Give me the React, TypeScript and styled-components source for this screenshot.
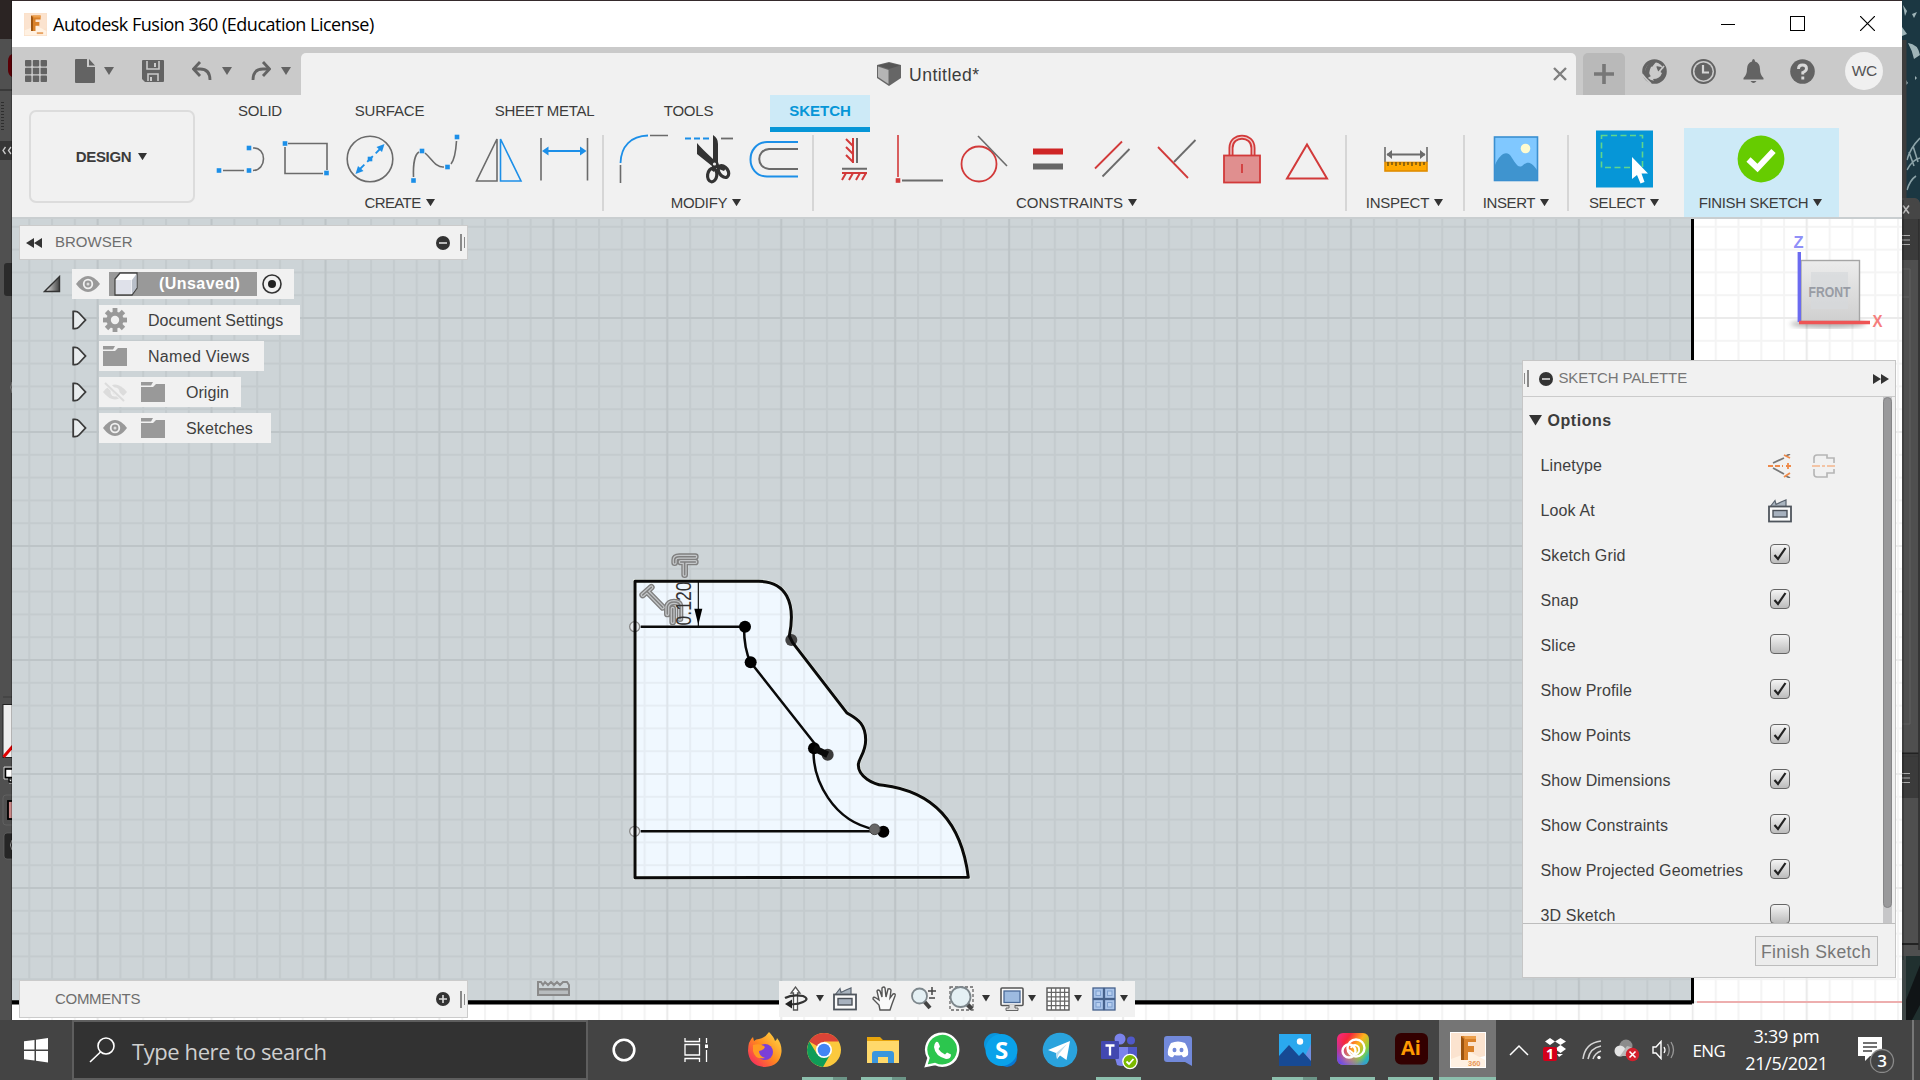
import React from "react";
import styled, { createGlobalStyle, css } from "styled-components";

const ui = `"Liberation Sans", Arial, sans-serif`;
const segoe = `"Open Sans", "Noto Sans", sans-serif`;

const Global = createGlobalStyle`
  * { box-sizing: border-box; }
  body { margin: 0; background: #444; overflow: hidden; }
  svg { display: block; flex: none; }
`;

/* ---------- frame ---------- */
const Screen = styled.div`
  width: 1920px; height: 1080px; display: flex; flex-direction: column;
  font-family: ${ui}; font-size: 16px; color: #3c3c3c; white-space: nowrap; overflow: hidden;
`;
const Desktop = styled.div`display: flex; height: 1020px; background: #352a2c;`;
const AppWindow = styled.main`
  width: 1890px; height: 1019px; margin-top: 1px; display: flex; flex-direction: column; background: #f1f1f1;
`;
const TitleBar = styled.header`
  height: 46px; background: #fff; display: flex; align-items: center; padding: 0 27px 0 12px;
  font-family: ${segoe}; color: #000;
`;
const Title = styled.span`font-size: 18px; letter-spacing: -0.5px; margin-left: 6px; flex: 1;`;
const WinButtons = styled.div`display: flex; gap: 55px; align-items: center; padding-bottom: 1px;`;

const DocBar = styled.div`height: 48px; background: #cacaca; display: flex; align-items: flex-end;`;
const QuickTools = styled.div`width: 289px; height: 48px; display: flex; align-items: center; padding: 0 0 0 12px;`;
const DocTab = styled.div`
  width: 1275px; height: 42px; background: #f1f1f1; border-radius: 5px 5px 0 0; display: flex; align-items: center;
  padding: 0 9px 0 576px;
`;
const DocName = styled.span`font-size: 17.6px; margin-left: 8px; flex: 1; letter-spacing: 0.45px; padding-top: 3px;`;
const NewTab = styled.div`
  width: 42px; height: 42px; margin-left: 7px; background: #b9b9b9; border-radius: 5px 5px 0 0;
  display: flex; align-items: center; justify-content: center;
`;
const Account = styled.div`flex: 1; height: 48px; display: flex; align-items: center; padding-left: 17px; gap: 24.3px;`;
const Avatar = styled.div`
  width: 38px; height: 38px; border-radius: 50%; background: #f0f0f0; margin-left: 6px; color: #555;
  font-size: 15.5px; letter-spacing: -0.5px; display: flex; align-items: center; justify-content: center;
`;

/* ---------- ribbon ---------- */
const Ribbon = styled.section`height: 122px; display: flex; background: #f1f1f1;`;
const Workspace = styled.div`
  width: 166px; height: 93px; margin: 15px 0 0 17px; border: 2px solid #dcdcdc; border-radius: 7px;
  display: flex; align-items: center; justify-content: center; gap: 7px; font-weight: bold; font-size: 15px;
  letter-spacing: -0.35px; padding-right: 1px;
`;
const RibbonBody = styled.div`flex: 1; display: flex; flex-direction: column; margin-left: 14px;`;
const Tabs = styled.nav`height: 37px; display: flex; font-size: 15px;`;
const Tab = styled.span<{ $w: number; $on?: boolean; $ls?: number }>`
  width: ${p => p.$w}px; height: 37px; display: flex; align-items: center; justify-content: center;
  letter-spacing: ${p => p.$ls ?? -0.2}px; padding-bottom: 6px;
  ${p => p.$on && css`background: #cdeaf7; color: #0696d7; font-weight: bold; border-bottom: 5px solid #0696d7; padding: 0 0 1px;`}
`;
const Groups = styled.div`height: 85px; display: flex;`;
const Group = styled.div<{ $w: number; $line?: boolean; $hot?: boolean; $end?: number }>`
  width: ${p => p.$w}px; height: 89px; margin-top: -4px; padding: 6px ${p => p.$end ?? 0}px 0 0; display: flex; flex-direction: column;
  align-items: center; background: ${p => (p.$hot ? "#cdeaf7" : "none")};
  background-image: ${p => (p.$line ? "linear-gradient(#d6d6d6,#d6d6d6)" : "none")};
  background-size: 2px 76px; background-repeat: no-repeat; background-position: right 0 top 7px;
`;
const Tools = styled.div`display: flex; height: 50px;`;
const Tool = styled.div`width: 64.6px; display: flex; justify-content: center;`;
const GroupName = styled.div<{ $ls?: number; $shift?: number }>`
  display: flex; align-items: center; gap: 5px; font-size: 15px; letter-spacing: ${p => p.$ls ?? -0.25}px;
  margin-top: 9.5px; height: 18px; padding-right: ${p => p.$shift ?? 0}px;
`;

/* ---------- canvas & floating panels ---------- */
const Canvas = styled.section`position: relative; height: 803px; background: #fff; overflow: hidden;`;
const Panel = styled.div<{ $top: number; $h: number }>`
  position: absolute; left: 7px; top: ${p => p.$top}px; width: 449px; height: ${p => p.$h}px;
  background: #f1f1f1; border: 1px solid #cbcbcb; display: flex; align-items: center; font-size: 15px; color: #6e6e6e;
  padding: 0 2px 0 6px;
`;
const PanelName = styled.span<{ $indent: number; $ls?: number }>`
  margin-left: ${p => p.$indent}px; flex: 1; letter-spacing: ${p => p.$ls ?? 0}px; padding-bottom: 2px;
`;
const Grip = styled.span<{ $flip?: boolean }>`
  width: 5px; height: 17px; display: flex; align-items: center; justify-content: space-between;
  flex-direction: ${p => (p.$flip ? "row-reverse" : "row")};
  &::before, &::after { content: ""; width: 1.5px; background: #8a8a8a; height: 17px; }
  &::after { height: 11px; }
`;
const Tree = styled.div`position: absolute; left: 26px; top: 52px; display: flex; flex-direction: column; gap: 6px;`;
const TreeRow = styled.div<{ $pad: number }>`display: flex; align-items: center; height: 30px; padding-left: ${p => p.$pad}px;`;
const TreeBox = styled.div<{ $w: number; $gap: number }>`
  width: ${p => p.$w}px; height: 30px; background: #f1f1f1; margin-left: ${p => p.$gap}px; padding-left: 4px;
  display: flex; align-items: center;
`;
const TreeText = styled.span<{ $m: number; $ls?: number }>`
  margin-left: ${p => p.$m}px; color: #3f3f3f; padding-top: 2px; letter-spacing: ${p => p.$ls ?? 0.05}px;
`;
const Selected = styled.div`
  width: 148px; height: 24px; margin: 0 5px 0 9px; background: #999; color: #fff; font-weight: bold; letter-spacing: 0.45px;
  display: flex; align-items: center; padding-left: 5px; gap: 21px;
`;

const Palette = styled.aside`
  position: absolute; left: 1509.5px; top: 143px; width: 374px; height: 618px; background: #f1f1f1;
  border: 1px solid #c6c6c6; display: flex; flex-direction: column;
`;
const PaletteHead = styled.div`
  height: 36px; border-bottom: 1.5px solid #cbcbcb; display: flex; align-items: center; font-size: 15px; color: #777;
  padding: 0 6px 0 1px; letter-spacing: -0.2px;
`;
const PaletteBody = styled.div`height: 527px; display: flex; justify-content: space-between; overflow: hidden; border-bottom: 1.5px solid #bdbdbd;`;
const Options = styled.div`flex: 1;`;
const OptionsHead = styled.div`
  height: 46px; display: flex; align-items: center; gap: 6px; padding: 1px 0 0 6px; font-weight: bold; letter-spacing: 0.55px;
`;
const OptionRow = styled.div`height: 45px; display: flex; align-items: center; padding-left: 18px; letter-spacing: 0.14px; color: #404040;`;
const OptionName = styled.span`width: 227.5px;`;
const Check = styled.span`
  width: 20px; height: 20px; margin: -4px 0 0 2px; border: 1.5px solid #666; border-radius: 4px;
  background: linear-gradient(#f4f4f4, #bcbcbc); display: flex; align-items: center; justify-content: center;
`;
const Scroll = styled.div`width: 9px; margin-right: 3px; background: #c6c6c8;`;
const Thumb = styled.div`height: 511px; border-radius: 5px; background: #99999b; border: 1px solid #858587;`;
const PaletteFoot = styled.div`flex: 1; display: flex; align-items: center; justify-content: flex-end; padding: 1px 17px 0 0;`;
const FinishButton = styled.button`
  width: 123px; height: 30px; border: 1.5px solid #bdbdbd; background: #ececec; color: #777; font: 17.6px ${ui};
  padding: 2px 0 0; letter-spacing: 0.35px;
`;
const NavBar = styled.div`
  position: absolute; left: 767px; top: 763.5px; width: 356px; height: 36px; background: #f1f1f1; display: flex;
  align-items: center; padding-left: 4px;
`;
const NavItem = styled.span<{ $w: number; $gap?: number }>`width: ${p => p.$w}px; display: flex; align-items: center; gap: ${p => p.$gap ?? 4}px;`;

/* ---------- taskbar ---------- */
const Taskbar = styled.footer`height: 60px; background: #444; display: flex; font-family: ${segoe}; color: #fff;`;
const Cell = styled.div<{ $w: number; $hot?: boolean }>`
  width: ${p => p.$w}px; height: 60px; display: flex; flex-direction: column; align-items: center; justify-content: space-between;
  padding-top: 12px; background: ${p => (p.$hot ? "#757575" : "none")};
`;
const Running = styled.div<{ $w: number; $two?: boolean }>`
  width: ${p => p.$w}px; height: 3px;
  background: ${p => (p.$two ? "linear-gradient(90deg,#8cbfad 68%,#52705f 68%,#52705f 70%,#6c9587 70%)" : "#8cbfad")};
`;
const Search = styled.div`
  width: 516px; height: 60px; background: #323232; border: 2px solid #5e5e5e; display: flex; align-items: center;
  padding-left: 15px; gap: 17px; font-size: 22px; letter-spacing: -0.42px; color: #cfcfcf;
`;
const Prompt = styled.span`padding-top: 2px;`;
const Tray = styled.div`display: flex; align-items: center; margin-left: 13px; font-size: 18px;`;
const Lang = styled.span`margin-left: 16px; width: 34px; font-size: 17px; letter-spacing: -0.6px;`;
const Clock = styled.div`
  margin-left: 15px; width: 90px; display: flex; flex-direction: column; align-items: center; line-height: 27px;
  font-size: 18px; letter-spacing: -0.3px;
`;
const ShowDesktop = styled.div`margin-left: 16px; width: 2px; height: 60px; background: #777;`;
const Spacer = styled.div<{ $w: number }>`width: ${p => p.$w}px; flex: none;`;

/* ---------- small icons ---------- */
const Caret = ({ s = 9, c = "#333" }: { s?: number; c?: string }) => (
  <svg width={s} height={s * 0.8} viewBox="0 0 10 8"><path d="M0 0H10L5 8Z" fill={c} /></svg>
);
const Ico = ({ w, h = w, vb, children }: { w: number; h?: number; vb?: string; children: React.ReactNode }) => (
  <svg width={w} height={h} viewBox={vb ?? `0 0 ${w} ${h}`} fill="none">{children}</svg>
);
const RoundSign = ({ plus }: { plus?: boolean }) => (
  <Ico w={14}><circle cx="7" cy="7" r="7" fill="#333" /><path d={plus ? "M3 7H11M7 3V11" : "M3 7H11"} stroke="#ddd" strokeWidth="1.6" /></Ico>
);
const Eye = () => (
  <Ico w={24} h={16}>
    <path d="M0 8Q12-8 24 8Q12 24 0 8Z" fill="#999" /><circle cx="12" cy="8" r="5.2" fill="#f1f1f1" />
    <circle cx="12" cy="8" r="3.4" fill="#999" /><circle cx="12" cy="8" r="1.5" fill="#ddd" />
  </Ico>
);
const EyeOff = () => (
  <Ico w={24} h={20}>
    <path d="M0 10Q12-5 24 10Q12 25 0 10Z" fill="#dcdcdc" /><circle cx="12" cy="10" r="4.5" fill="#f1f1f1" />
    <circle cx="12" cy="10" r="2.5" fill="#dcdcdc" /><path d="M2 0L22 19" stroke="#f1f1f1" strokeWidth="5" /><path d="M2 1L21 19" stroke="#dcdcdc" strokeWidth="2" />
  </Ico>
);
const Folder = () => (
  <Ico w={24} h={20}><path d="M0 5H12L15 2H24V20H0Z" fill="#999" /><path d="M0 0H12L10 3.4H0Z" fill="#999" /></Ico>
);
const Gear = () => (
  <Ico w={24}>
    {[0, 45, 90, 135].map(a => <rect key={a} x="9.6" y="0" width="4.8" height="24" fill="#999" transform={`rotate(${a} 12 12)`} />)}
    <circle cx="12" cy="12" r="8.6" fill="#999" /><circle cx="12" cy="12" r="4.2" fill="#f1f1f1" />
  </Ico>
);
const Expand = () => (
  <Ico w={15} h={20}><path d="M1.2 1.5Q5 .8 7 3L13.5 10L7 17Q5 19.2 1.2 18.5Z" fill="#e8ecee" stroke="#3a3a3a" strokeWidth="1.8" /></Ico>
);
const LookAt = () => (
  <Ico w={24} h={24}>
    <path d="M2 8L7 1.500L8 5.500L13 3L18 1V7.500" fill="#a9b4bf" stroke="#5a6470" strokeWidth="1.2" />
    <rect x="1" y="7.500" width="22" height="15" fill="#fafafa" stroke="#4f555d" strokeWidth="1.800" />
    <rect x="5" y="11.500" width="14" height="6.500" fill="#a7b1be" stroke="#4a5058" strokeWidth="1.4" />
  </Ico>
);

const K = "#6b6b6b", B = "#1c8fe8", R = "#d23a3a";
const Dot = ({ x, y, c = B }: { x: number; y: number; c?: string }) => <rect x={x - 2.3} y={y - 2.3} width="4.6" height="4.6" fill={c} />;
const T = ({ children }: { children: React.ReactNode }) => (
  <Tool><svg width="50" height="50" viewBox="0 0 50 50" fill="none" strokeWidth="1.6">{children}</svg></Tool>
);

const CreateTools = () => (
  <Tools>
    <T><path d="M7 36.5H28M37 14C51 13 51 36 37 36.5" stroke={K} /><Dot x={3} y={36.5} /><Dot x={33} y={36.5} /><Dot x={33} y={14} /></T>
    <T><path d="M7 9.5H46V36M42 39.5H4V13" stroke={K} /><Dot x={4} y={9.5} /><Dot x={45.5} y={39} /></T>
    <T>
      <circle cx="25" cy="25" r="22.8" stroke={K} /><path d="M13 37L37 13" stroke={B} strokeWidth="1.800" strokeDasharray="9 4 8 4" />
      <path d="M39.5 10L37 18L31.5 13Z M10.5 40L13 32L18.5 37Z" fill={B} /><Dot x={25} y={25} />
    </T>
    <T>
      <path d="M3.5 43C3 30 5 20 9 18M15 19C22 25 26 34 34 33M41 30C45 25 46 15 46.5 7" stroke={K} />
      <Dot x={3.5} y={46.5} /><Dot x={12} y={17} /><Dot x={37.5} y={33} /><Dot x={47} y={3} />
    </T>
    <T><path d="M23 5V47H2.5Z" stroke={K} /><path d="M26.5 5V47H47Z" stroke={B} /></T>
    <T><path d="M2 4V46.5M48.5 4V46.5" stroke={K} /><path d="M7 17H44" stroke={B} strokeWidth="2" /><path d="M3 17L9.5 12.5V21.5Z M47.5 17L41 12.5V21.5Z" fill={B} /></T>
  </Tools>
);
const ModifyTools = () => (
  <Tools>
    <T><path d="M1.5 29C2 12 12 2 29 1.5" stroke={B} strokeWidth="1.800" /><path d="M1.5 31V49M31 1.5H49" stroke={K} /></T>
    <T>
      <path d="M1 4.5H25" stroke={B} strokeWidth="2" strokeDasharray="6 3" /><path d="M37 4.5H49" stroke={K} strokeWidth="1.8" />
      <path d="M29 1Q34 4 34 10V28L35 31L42 34L40 37L32 34L30 38L27 36L28 32L13 20L13 9Q17 14 29 25Z" fill="#333" />
      <circle cx="30.5" cy="30" r="1.6" fill="#eee" />
      <ellipse cx="28.2" cy="41" rx="4.6" ry="6.8" stroke="#333" strokeWidth="3.2" transform="rotate(8 28 41)" />
      <ellipse cx="39.5" cy="37.5" rx="4.4" ry="6.6" stroke="#333" strokeWidth="3.2" transform="rotate(-35 39.5 37.5)" />
    </T>
    <T><path d="M49 8H18C-4 9-4 42 18 42.5H49" stroke={B} strokeWidth="2" /><path d="M49 15H20C7 16 7 34 20 35H49" stroke={K} strokeWidth="2" /></T>
  </Tools>
);
const ConstraintTools = () => (
  <Tools>
    <T>
      <path d="M24 4V29M17 5L24 12M17 13L24 20M17 21L24 28M13 39H38M17 39L13 46M24 39L20 46M31 39L27 46M37 39L33 46" stroke={R} strokeWidth="2" />
      <path d="M28 4V29M13 34.8H38" stroke={K} strokeWidth="2" />
    </T>
    <T><path d="M4 1V43" stroke={R} /><path d="M8 46.5H49" stroke={K} strokeWidth="1.8" /><Dot x={4} y={46.5} c={R} /></T>
    <T><circle cx="20" cy="30" r="17.5" stroke={R} strokeWidth="1.8" /><path d="M19 2L48 32" stroke={K} /></T>
    <T><rect x="10" y="14.5" width="30" height="6" fill="#cf2525" /><rect x="10" y="29.5" width="30" height="6" fill="#666" /></T>
    <T><path d="M7 34.5L34 7.5" stroke={R} strokeWidth="1.8" /><path d="M14.500 42.500L41.500 15" stroke={K} strokeWidth="1.8" /></T>
    <T><path d="M6 13L36 44" stroke={R} strokeWidth="1.8" /><path d="M22 28L43.500 6" stroke={K} strokeWidth="1.8" /></T>
    <T>
      <path d="M14 22V14C14 -.5 36 -.5 36 14V22" stroke={R} strokeWidth="5" /><path d="M14 22V14C14 -.5 36 -.5 36 14V22" stroke="#f0c9c9" strokeWidth="1.4" />
      <rect x="7" y="21.500" width="36" height="27" fill="#e08f8f" stroke={R} strokeWidth="1.800" /><path d="M25 30V39" stroke={R} strokeWidth="1.800" />
    </T>
    <T><path d="M25 10.500L45 44.500H5Z" stroke={R} strokeWidth="2" /></T>
  </Tools>
);

const glyphs = "M286 50H238Q224 50 224 60V68M286 66H242M254 66V104M128 165L154 142M142 155L188 202M202 222V200Q206 186 222 186Q240 186 240 200V236M218 206V246";

const Sketch = () => (
  <svg width="1890" height="803" viewBox="12 217 1890 803" fill="none">
    <defs>
      <pattern id="minor" x="97.6" y="318" width="22.79" height="22.8" patternUnits="userSpaceOnUse">
        <path d="M0 0H22.8M0 0V22.8M0 22.8H22.8M22.8 0V22.8" stroke="#000" strokeOpacity=".042" strokeWidth="2" />
      </pattern>
      <pattern id="major" x="97.6" y="318" width="113.93" height="114" patternUnits="userSpaceOnUse">
        <path d="M0 0H114M0 0V114M0 114H114M113.93 0V114" stroke="#000" strokeOpacity=".035" strokeWidth="2.2" />
      </pattern>
      <linearGradient id="cubeface" x1="0" y1="0" x2="0" y2="1"><stop stopColor="#ececec" /><stop offset="1" stopColor="#cfcfcf" /></linearGradient>
      <filter id="soft"><feGaussianBlur stdDeviation="2.5" /></filter>
    </defs>
    <rect x="12" y="217" width="1681" height="785" fill="#cdd4d7" />
    <g transform="translate(600 540) scale(.33333)">
      <path d="M105 124H470C560 121 588 190 568 288L578 308L740 518C765 535 797 545 797 600C797 640 775 655 775 675C775 710 820 733 850 736C1000 755 1085 850 1105 1012L105 1013Z" fill="#f0f8ff" stroke="#f4fbf2" strokeWidth="11" />
    </g>
    <rect x="12" y="217" width="1890" height="803" fill="url(#minor)" />
    <rect x="12" y="217" width="1890" height="803" fill="url(#major)" />
    <path d="M1694 217V1000M1694 1004V1020" stroke="#fff" strokeOpacity=".6" />
    <path d="M1692.500 217V1002H12" stroke="#000" strokeWidth="3" />
    <path d="M12 1002.500H1692" stroke="#000" strokeWidth="4" />
    <path d="M1697 1002H1902" stroke="#ee9a9a" strokeWidth="1.600" />
    <rect x="12" y="217" width="1890" height="2" fill="#c9ced0" />
    <g transform="translate(600 540) scale(.33333)" stroke="#0a0a0a">
      <circle cx="104" cy="260" r="15" stroke="#888" strokeWidth="4" fill="#e6eaec" /><circle cx="104" cy="874" r="15" stroke="#888" strokeWidth="4" fill="#e6eaec" />
      <circle cx="574" cy="300" r="18" fill="#444" stroke="none" /><circle cx="683" cy="644" r="18" fill="#3a3a3a" stroke="none" />
      <path d="M105 124H470C560 121 588 190 568 288L578 308L740 518C765 535 797 545 797 600C797 640 775 655 775 675C775 710 820 733 850 736C1000 755 1085 850 1105 1012L105 1013Z" strokeWidth="9" strokeLinejoin="round" />
      <path d="M122 260H432C432 300 438 340 452 367L645 612M641 625C636 720 700 845 825 868M122 874H848" strokeWidth="7.500" />
      <path d="M295 124V258" strokeWidth="3.500" /><path d="M283 206H307L295 254Z" fill="#000" stroke="none" />
      <g fill="#000" stroke="none"><circle cx="435" cy="260" r="18" /><circle cx="452" cy="367" r="18" /><circle cx="642" cy="625" r="18" /><circle cx="850" cy="875" r="18" /></g>
      <path d="M642 625L683 644" strokeWidth="20" /><circle cx="824" cy="868" r="16" fill="#666" stroke="#444" strokeWidth="3" />
      <g strokeLinejoin="round" strokeLinecap="round">
        <path d={glyphs} stroke="#808080" strokeWidth="20" /><path d={glyphs} stroke="#c3c6c8" strokeWidth="12" /><path d={glyphs} stroke="#808080" strokeWidth="4.500" />
      </g>
    </g>
    <text transform="translate(690.500 625.500) rotate(-90)" fontFamily="Liberation Sans, sans-serif" fontSize="22" textLength="44" lengthAdjust="spacingAndGlyphs" fill="#333">0.120</text>
    <g stroke="#8a8a8a" strokeWidth="2"><path d="M538 989V982H541L543 985L545 982L548 985L551 982L554 985L557 982L560 985L563 982H567L569 985V989Z" /><rect x="538" y="989.500" width="31" height="5.500" fill="#b8bcbe" /></g>

    <ellipse cx="1828" cy="324" rx="38" ry="4" fill="#000" opacity=".3" filter="url(#soft)" />
    <rect x="1801" y="260.500" width="58.500" height="61" fill="url(#cubeface)" stroke="#a5a5a5" strokeWidth="1.400" />
    <rect x="1811" y="272" width="37" height="37" fill="#d6d8dc" opacity=".7" />
    <text x="1808.500" y="296.500" fontFamily="Liberation Sans, sans-serif" fontWeight="bold" fontSize="15.500" textLength="42" lengthAdjust="spacingAndGlyphs" fill="#989ca4">FRONT</text>
    <path d="M1799.300 252V322" stroke="#6b6bf0" strokeWidth="3.400" /><path d="M1799 322.500H1870" stroke="#ee5555" strokeWidth="3.400" />
    <text x="1793.500" y="248" fontFamily="Liberation Sans, sans-serif" fontWeight="bold" fontSize="16.500" fill="#9090f8">Z</text>
    <text x="1872.500" y="327" fontFamily="Liberation Sans, sans-serif" fontWeight="bold" fontSize="16" textLength="10" lengthAdjust="spacingAndGlyphs" fill="#f67d7d">X</text>
  </svg>
);

/* Slivers of the windows lying behind the main one */
const LeftEdge = () => (
  <svg width="12" height="1020" fill="none">
    <rect width="12" height="1020" fill="#505050" /><rect width="12" height="39" fill="#2b2423" />
    <path d="M0 90H12" stroke="#333" strokeWidth="1.500" /><path d="M12 54Q8 56 8 61V70Q8 75 12 77Z" fill="#5a0006" />
    <path d="M2.500 102V131" stroke="#2e2e2e" strokeWidth="3" strokeDasharray="1 2" />
    <rect y="141" width="12" height="19" fill="#363636" /><path d="M5.500 147L3 150.500L5.500 154M11 147L8.500 150.500L11 154" stroke="#ccc" strokeWidth="1.300" />
    <rect x="4" y="263" width="12" height="33" rx="3" fill="#2b2b2b" /><path d="M12 382Q10 387 12 393" stroke="#999" />
    <path d="M3 697H12" stroke="#3a3a3a" /><rect x="3" y="704.500" width="12" height="53" fill="#efefef" stroke="#222" /><path d="M3.500 757L13 746" stroke="#e00000" strokeWidth="3" />
    <path d="M12 767H4V779H9V783H12" stroke="#ccc" /><path d="M12 769H5.500V777.500H12M9 778V782H12" stroke="#000" strokeWidth="1.500" fill="#fff" />
    <rect x="3" y="795" width="12" height="30" rx="3" stroke="#606060" /><rect x="8" y="801" width="8" height="18" fill="#c98888" stroke="#000" strokeWidth="1.800" />
    <rect x="4" y="833" width="12" height="26" rx="3" fill="#262626" stroke="#666" strokeWidth=".7" /><path d="M12 840Q9 845 12 850" stroke="#999" />
    <rect x="11" width="1" height="1020" fill="#000" opacity=".25" />
  </svg>
);
const RightEdge = () => (
  <svg width="18" height="1020" fill="none">
    <rect width="18" height="1020" fill="#1b3742" />
    <path d="M1 5L5 11L3 16ZM10 14L15 12L12 18ZM0 27L5 34L0 36ZM6 43Q16 44 18 55L12 59Q10 50 6 43ZM4 80L6 83L4 85ZM13 76L15 78L13 80Z" fill="#9fb4b8" />
    <path d="M5 160Q8 148 18 138M5 170Q10 160 18 158M7 152L12 166M11 146L16 162M5 190Q8 180 14 176" stroke="#8ca3a8" strokeWidth="1.600" />
    <rect y="40" width="4.500" height="160" fill="#3d3d3d" />
    <path d="M0 198H12Q18 199 18 205V960H0Z" fill="#4f4f4f" /><path d="M0 198H12Q18 199 18 205V219H0Z" fill="#464646" />
    <path d="M1 205.500L7 213.500M7 205.500L1 213.500" stroke="#bbb" strokeWidth="1.500" />
    <rect y="219" width="17" height="41" fill="#3b3b3b" /><path d="M0 235.500H8M0 240H8M0 244.500H8M0 773.500H8M0 778H8M0 782.500H8" stroke="#aaa" strokeWidth="1.200" />
    <path d="M0 269H8V724H0M0 297H7" stroke="#606060" /><path d="M0 754.500H17" stroke="#222" strokeWidth="4" /><path d="M0 755H17" stroke="#555" />
    <rect y="757" width="17" height="41" fill="#3b3b3b" /><path d="M0 773.500H8M0 778H8M0 782.500H8" stroke="#aaa" strokeWidth="1.200" />
    <path d="M0 944H17" stroke="#222" strokeWidth="2" /><path d="M17 219V950" stroke="#2c2c2c" strokeWidth="1.500" />
    <rect y="956" width="18" height="64" fill="#20302f" /><path d="M4 1000L18 965V1005L10 1020H4Z" fill="#101416" /><rect y="956" width="4" height="64" fill="#3e4646" />
    <rect width="2" y="200" height="760" fill="#000" opacity=".2" />
  </svg>
);

const options: [string, boolean][] = [
  ["Sketch Grid", true], ["Snap", true], ["Slice", false], ["Show Profile", true], ["Show Points", true],
  ["Show Dimensions", true], ["Show Constraints", true], ["Show Projected Geometries", true], ["3D Sketch", false],
];

const FusionMark = ({ s, big }: { s: number; big?: boolean }) => (
  <Ico w={s} vb="0 0 36 36">
    <rect width="36" height="36" fill={big ? "#fff" : "#fbe0c8"} /><path d="M1 1H35V24L1 32Z" fill="#fbe3cf" /><path d="M1 27L20 20L35 28V35H1Z" fill="#fff1e2" />
    <path d="M11 4H26V10H18V14H24V20H18V28H11Z" fill="#d9812a" /><path d="M11 4L14 7V28H11Z" fill="#9c5410" /><path d="M14 4H26V7H15Z" fill="#eda04c" />
    {big ? <text x="18" y="34" fontFamily="Liberation Sans, sans-serif" fontSize="7.500" fontWeight="bold" fill="#e8985a">360</text> : <path d="M20 30H30V33H20Z" fill="#e9a566" />}
  </Ico>
);

export default function App() {
  return (
    <Screen>
      <Global />
      <Desktop>
        <LeftEdge />
        <AppWindow>
          <TitleBar>
            <FusionMark s={23} />
            <Title>Autodesk Fusion 360 (Education License)</Title>
            <WinButtons>
              <Ico w={14}><path d="M0 7.500H14" stroke="#000" /></Ico>
              <Ico w={15}><rect x=".5" y=".5" width="14" height="14" stroke="#000" /></Ico>
              <Ico w={15}><path d="M0 0L15 15M15 0L0 15" stroke="#000" strokeWidth="1.200" /></Ico>
            </WinButtons>
          </TitleBar>

          <DocBar>
            <QuickTools>
              <Spacer $w={1} />
              <Ico w={22}>{[0, 1, 2].map(r => [0, 1, 2].map(c => <rect key={`${r}${c}`} x={c * 7.800} y={r * 7.800} width="6.400" height="6.400" rx=".8" fill="#636363" />))}</Ico>
              <Spacer $w={28} />
              <Ico w={20} h={24}><path d="M1 0H12V8H20V23Q20 24 19 24H1Q0 24 0 23V1Q0 0 1 0ZM14 0L20 6.500H14Z" fill="#636363" /></Ico>
              <Spacer $w={9} /><Caret s={10} c="#636363" /><Spacer $w={28} />
              <Ico w={22}><path d="M1 0H21Q22 0 22 1V21Q22 22 21 22H3L0 19V1Q0 0 1 0Z" fill="#636363" /><path d="M5 1V9H17V1M6 21V14H16V21" stroke="#cacaca" strokeWidth="1.600" /><path d="M13 3V7M9 17V21" stroke="#cacaca" strokeWidth="2" /></Ico>
              <Spacer $w={28} />
              <Ico w={20}><path d="M2 8H8Q18 8 18 19" stroke="#636363" strokeWidth="2.800" /><path d="M8 1L1.500 8L8 15" stroke="#636363" strokeWidth="2.800" /></Ico>
              <Spacer $w={10} /><Caret s={10} c="#636363" /><Spacer $w={19} />
              <Ico w={20}><path d="M18 8H12Q2 8 2 19" stroke="#636363" strokeWidth="2.800" /><path d="M12 1L18.500 8L12 15" stroke="#636363" strokeWidth="2.800" /></Ico>
              <Spacer $w={10} /><Caret s={10} c="#636363" />
            </QuickTools>
            <DocTab>
              <Ico w={24}><path d="M0 3L12 0L24 3V16L12 24L0 16Z" fill="#666" /><path d="M1 4.500L11.500 8V22L1 15Z" fill="#b5b5b5" /><path d="M1 3.500L12 7L23 3.500L12 1Z" fill="#555" /></Ico>
              <DocName>Untitled*</DocName>
              <Ico w={14}><path d="M1 1L13 13M13 1L1 13" stroke="#808080" strokeWidth="2.400" /></Ico>
            </DocTab>
            <NewTab><Ico w={20}><path d="M10 0V20M0 10H20" stroke="#777" strokeWidth="3.600" /></Ico></NewTab>
            <Account>
              <Ico w={25}>
                <circle cx="12.500" cy="12.500" r="10.800" stroke="#636363" strokeWidth="3" />
                <path d="M5 7Q8 2 14 3L10 8Q6 13 9 17L4 20Q1 13 5 7ZM14 7L16 12L20 14Q18 20 11 20L13 24Q24 23 23 11L19 8Z" fill="#636363" />
                <path d="M10 8Q6 16 11 17Q17 18 18 12M13 9L15 4M17 13L22 7" stroke="#cacaca" strokeWidth="1.800" /><path d="M0 15L4 20L9 25" stroke="#cacaca" strokeWidth="1.800" />
              </Ico>
              <Ico w={25}><circle cx="12.500" cy="12.500" r="11.500" stroke="#636363" strokeWidth="1.800" /><circle cx="12.500" cy="12.500" r="9" fill="#636363" /><path d="M12 6V13.500H18" stroke="#d5d5d5" strokeWidth="2.200" /></Ico>
              <Ico w={25}><path d="M12.500 0Q14 0 14 2.500Q19 4 19 10Q19 16 22.500 19V20.500H2.500V19Q6 16 6 10Q6 4 11 2.500Q11 0 12.500 0Z M9.500 22H15.500Q12.500 26 9.500 22Z" fill="#636363" /></Ico>
              <Ico w={25}><circle cx="12.500" cy="12.500" r="12.300" fill="#636363" /><path d="M8.500 10Q8.500 6 12.500 6Q16.500 6 16.500 9.500Q16.500 12 12.800 13.500V15.500M12.800 17.500V20.500" stroke="#d8d8d8" strokeWidth="2.900" /></Ico>
              <Avatar>WC</Avatar>
            </Account>
          </DocBar>

          <Ribbon>
            <Workspace>DESIGN <Caret /></Workspace>
            <RibbonBody>
              <Tabs>
                <Spacer $w={1} />
                <Tab $w={100}>SOLID</Tab><Tab $w={159}>SURFACE</Tab><Tab $w={151} $ls={-0.300}>SHEET METAL</Tab><Tab $w={137}>TOOLS</Tab>
                <Spacer $w={13} />
                <Tab $w={100} $on $ls={0}>SKETCH</Tab>
              </Tabs>
              <Groups>
                <Group $w={395} $line $end={8}>
                  <CreateTools /><GroupName $ls={-0.600} $shift={6}>CREATE <Caret /></GroupName>
                </Group>
                <Group $w={210} $line><ModifyTools /><GroupName $ls={-0.300} $shift={6}>MODIFY <Caret /></GroupName></Group>
                <Group $w={533} $line><ConstraintTools /><GroupName $ls={-0.050} $shift={8}>CONSTRAINTS <Caret /></GroupName></Group>
                <Group $w={118} $line>
                  <Tools><T>
                    <path d="M4 13V28M46 13V28" stroke={K} /><path d="M6 20.500H44" stroke={K} strokeWidth="1.800" /><path d="M5.500 20.500L11 16V25ZM44.500 20.500L39 16V25Z" fill={K} />
                    <rect x="4" y="28.500" width="42" height="8.500" fill="#ffa800" stroke="#e08c00" /><path d="M7 28V32M11 28V31M15 28V32M19 28V31M23 28V32M27 28V31M31 28V32M35 28V31M39 28V32M43 28V31" stroke="#7a5a10" />
                  </T></Tools>
                  <GroupName $shift={3}>INSPECT <Caret /></GroupName>
                </Group>
                <Group $w={104} $line $end={3}>
                  <Tools><T>
                    <rect x="3.500" y="3" width="43" height="43.500" fill="#80c8ff" stroke="#3a8fd0" /><circle cx="34.500" cy="14.500" r="4.800" fill="#fdfbd0" />
                    <path d="M4 31C9 20 16 15 21 24C25 30 27 34 31 32C36 27 40 27 46 36V46H4Z" fill="#3f94cf" />
                  </T></Tools>
                  <GroupName $ls={-0.400}>&#8202;INSERT <Caret /></GroupName>
                </Group>
                <Group $w={115} $end={4}>
                  <Tools>
                    <svg width="57" height="57" viewBox="0 0 57 57" fill="none" overflow="visible">
                      <rect y="-3.500" width="57" height="57" fill="#0696d7" /><rect x="5.500" y="1.500" width="41" height="32" stroke="#5fd68c" strokeWidth="1.600" strokeDasharray="6 3.500" />
                      <path d="M36 23V45L41 41L44.500 49.500L48.500 48L45.500 39.500H52Z" fill="#fff" />
                    </svg>
                  </Tools>
                  <GroupName $ls={-0.400} $shift={1}>SELECT <Caret /></GroupName>
                </Group>
                <Group $w={155} $hot $end={2}>
                  <Tools><T><circle cx="25" cy="25" r="23.400" fill="#66cc00" /><path d="M12.500 25.500L21.500 34L37.500 17" stroke="#fff" strokeWidth="6" /></T></Tools>
                  <GroupName $ls={-0.350}>FINISH SKETCH <Caret /></GroupName>
                </Group>
              </Groups>
            </RibbonBody>
          </Ribbon>

          <Canvas>
            <Sketch />
            <Panel $top={8} $h={35}>
              <Ico w={16} h={10}><path d="M8 0V10L0 5ZM16 0V10L8 5Z" fill="#333" /></Ico>
              <PanelName $indent={13}>BROWSER</PanelName><RoundSign /><Spacer $w={10} /><Grip />
            </Panel>
            <Tree>
              <TreeRow $pad={5}>
                <Ico w={18}><defs><linearGradient id="tri"><stop stopColor="#eee" /><stop offset="1" stopColor="#444" /></linearGradient></defs><path d="M16.500 1.500V16.500H1.500Z" fill="url(#tri)" stroke="#333" strokeWidth="1.400" /></Ico>
                <TreeBox $w={222} $gap={11}>
                  <Eye />
                  <Selected>
                    <Ico w={24}><path d="M1 7L6 1H23V16L18 23H1Z" fill="#fdfdfd" stroke="#444" strokeWidth="1.300" /><path d="M2 8H17.500V22H2Z" fill="#dfe1ea" /><path d="M18 8L22.500 2V16L18 22Z" fill="#b9bfc9" /></Ico>
                    (Unsaved)
                  </Selected>
                  <Ico w={20}><circle cx="10" cy="10" r="9" stroke="#333" strokeWidth="1.600" /><circle cx="10" cy="10" r="4" fill="#222" /></Ico>
                </TreeBox>
              </TreeRow>
              <TreeRow $pad={33.500}><Expand /><TreeBox $w={201} $gap={12.500}><Gear /><TreeText $m={21} $ls={0}>Document Settings</TreeText></TreeBox></TreeRow>
              <TreeRow $pad={33.500}><Expand /><TreeBox $w={165} $gap={12.500}><Folder /><TreeText $m={21} $ls={0.300}>Named Views</TreeText></TreeBox></TreeRow>
              <TreeRow $pad={33.500}><Expand /><TreeBox $w={142} $gap={12.500}><EyeOff /><Spacer $w={14} /><Folder /><TreeText $m={21}>Origin</TreeText></TreeBox></TreeRow>
              <TreeRow $pad={33.500}><Expand /><TreeBox $w={172} $gap={12.500}><Eye /><Spacer $w={14} /><Folder /><TreeText $m={21} $ls={0.150}>Sketches</TreeText></TreeBox></TreeRow>
            </Tree>

            <Palette>
              <PaletteHead>
                <Grip $flip /><Spacer $w={10} /><RoundSign /><PanelName $indent={6} $ls={-0.150}>SKETCH PALETTE</PanelName>
                <Ico w={16} h={10}><path d="M0 0V10L8 5ZM8 0V10L16 5Z" fill="#333" /></Ico>
              </PaletteHead>
              <PaletteBody>
                <Options>
                  <OptionsHead><Caret s={13} />Options</OptionsHead>
                  <OptionRow>
                    <OptionName>Linetype</OptionName>
                    <Ico w={24}><path d="M5 9L16 4M5 14L16 20M18 2L22 0M18 22L22 24" stroke="#777" strokeWidth="1.800" /><path d="M0 12H15M18 12H24" stroke="#ee8a4a" strokeWidth="1.800" strokeDasharray="5 2" /><path d="M20 9V15M16 1L22 4M16 23L22 19" stroke="#ee8a4a" strokeWidth="1.800" /></Ico>
                    <Spacer $w={20} />
                    <Ico w={24}><path d="M2 9V4Q2 1 5 1H15V4H22V9M2 15V20Q2 23 5 23H15V19H22V15" stroke="#b5b5b5" strokeWidth="1.600" /><path d="M0 12H24" stroke="#f3b58c" strokeWidth="1.600" strokeDasharray="8 2 3 2" /></Ico>
                  </OptionRow>
                  <OptionRow><OptionName>Look At</OptionName><LookAt /></OptionRow>
                  {options.map(([name, on]) => (
                    <OptionRow key={name}>
                      <OptionName>{name}</OptionName>
                      <Check>{on && <Ico w={14}><path d="M1.500 8L5 12L12.500 1" stroke="#222" strokeWidth="2.200" /></Ico>}</Check>
                    </OptionRow>
                  ))}
                </Options>
                <Scroll><Thumb /></Scroll>
              </PaletteBody>
              <PaletteFoot><FinishButton>Finish Sketch</FinishButton></PaletteFoot>
            </Palette>

            <Panel $top={763} $h={38}>
              <PanelName $indent={29} $ls={-0.300}>COMMENTS</PanelName><RoundSign plus /><Spacer $w={10} /><Grip />
            </Panel>

            <NavBar>
              <NavItem $w={50}>
                <Ico w={25}><path d="M10.500 24V7H8L12.500 1L17 7H14.500V24Z" fill="#fff" stroke="#555" strokeWidth="1.300" /><path d="M2 12Q9 8 20 10Q27 13 20 16Q14 19 7 18" stroke="#333" strokeWidth="2.200" /><path d="M2 18L9 13.500V22.500Z" fill="#222" /></Ico>
                <Spacer $w={0} /><Caret s={8} />
              </NavItem>
              <NavItem $w={39}><LookAt /></NavItem>
              <NavItem $w={39}><Ico w={25}><path d="M8 24L7 19L1 13Q1 10 4 12L7 14L5 5Q6 3 8 5L10 11L10 2Q12 0 13 2L14 11L16 3Q18 2 19 4L18 12L21 8Q24 7 23 10L20 18L18 24Z" fill="#fafafa" stroke="#555" strokeWidth="1.400" /></Ico></NavItem>
              <NavItem $w={38}><Ico w={25}><path d="M12 14L19 22" stroke="#444" strokeWidth="4" /><circle cx="8.500" cy="10" r="7.500" fill="#e4f0f4" stroke="#7d878c" strokeWidth="1.800" /><path d="M21 1V9M17 5H25M18 12H24" stroke="#444" strokeWidth="1.500" /></Ico></NavItem>
              <NavItem $w={51} $gap={8}><Ico w={25}><rect x="1" y="1" width="23" height="23" stroke="#666" strokeWidth="1.300" strokeDasharray="3 2" /><path d="M17 17L23 23" stroke="#444" strokeWidth="4.500" /><circle cx="11.500" cy="11" r="10" fill="#e4f0f4" stroke="#7d878c" strokeWidth="1.800" /></Ico><Caret s={8} /></NavItem>
              <NavItem $w={46}><Ico w={24}><rect x="1" y="1" width="22" height="17.500" rx="1" fill="#fafafa" stroke="#555" strokeWidth="1.600" /><rect x="4" y="4" width="16" height="11.500" fill="#9dbbe0" stroke="#4a6a98" strokeWidth="1.300" /><path d="M9 18V21H6V23.500H18V21H15V18" fill="#ddd" stroke="#666" /></Ico><Caret s={8} /></NavItem>
              <NavItem $w={46}><Ico w={24}><rect x="1" y="1" width="22" height="22" fill="#fff" stroke="#555" strokeWidth="1.400" /><path d="M5.400 1V23M9.800 1V23M14.200 1V23M18.600 1V23M1 5.400H23M1 9.800H23M1 14.200H23M1 18.600H23" stroke="#666" strokeWidth="1.200" /></Ico><Caret s={8} /></NavItem>
              <NavItem $w={42}><Ico w={24}>{[[1, 1], [12.500, 1], [1, 12.500], [12.500, 12.500]].map(([x, y]) => <g key={`${x}-${y}`} stroke="#46618c"><rect x={x} y={y} width="10.500" height="10.500" fill="#a9c4ea" strokeWidth="1.300" /><rect x={x + 3} y={y + 3} width="4.500" height="4.500" fill="#b9d0f0" stroke="#7fa0d0" /></g>)}</Ico><Caret s={8} /></NavItem>
            </NavBar>
          </Canvas>
        </AppWindow>
        <RightEdge />
      </Desktop>

      <Taskbar>
        <Cell $w={72}><Ico w={24} h={36}><path d="M0 9.300L10.500 8V17.500H0ZM12 7.800L24 6V17.500H12ZM0 19H10.500V28.500L0 27.200ZM12 19H24V30.500L12 28.800Z" fill="#fff" /></Ico></Cell>
        <Search>
          <Ico w={26}><circle cx="17" cy="9" r="8" stroke="#fff" strokeWidth="1.600" /><path d="M11.500 15L1 25" stroke="#fff" strokeWidth="1.600" /></Ico>
          <Prompt>Type here to search</Prompt>
        </Search>
        <Cell $w={72}><Ico w={26} h={36}><circle cx="13" cy="18" r="10.300" stroke="#fff" strokeWidth="2.600" /></Ico></Cell>
        <Cell $w={72}><Ico w={24} h={36}><path d="M1 6V9.500H15.500V6M1 30V26.500H15.500V30M1 12.500H15.500V23H1ZM22.500 6V11M22.500 18V30" stroke="#fff" strokeWidth="1.300" /><rect x="21" y="12.500" width="3" height="3.500" fill="#fff" /></Ico></Cell>
        <Spacer $w={4} />
        <Cell $w={58.900}>
          <Ico w={36}>
            <defs><linearGradient id="ff" x1="1" y1="0" x2="0" y2="1"><stop stopColor="#ffe14a" /><stop offset=".5" stopColor="#ff8a1e" /><stop offset="1" stopColor="#f5156c" /></linearGradient></defs>
            <path d="M22 0Q27 5 28 9Q30 8 30 6Q35 12 34.500 20Q33 34 18 35Q2 34 1 19Q1 9 6 5L7 9Q9 7 12 7Q18 6 22 0Z" fill="url(#ff)" />
            <circle cx="18" cy="20" r="8" fill="#7b3fd8" /><path d="M6 13Q14 11 18 15Q16 19 12 19Q12 24 18 26Q8 28 6 19Z" fill="#ff9a22" />
          </Ico>
        </Cell>
        <Cell $w={58.900}>
          <Ico w={36}>
            <circle cx="18" cy="18" r="17" fill="#fbc93d" /><path d="M18 18L3.300 9.500A17 17 0 0 1 32.700 9.500H18Z" fill="#db4437" /><path d="M3.300 9.500A17 17 0 0 0 17 35L24.500 22L11 22Z" fill="#0f9d58" />
            <circle cx="18" cy="18" r="8" fill="#fff" /><circle cx="18" cy="18" r="6.300" fill="#4285f4" />
          </Ico>
          <Running $w={45} $two />
        </Cell>
        <Cell $w={58.900}>
          <Ico w={34} h={36}><path d="M1 5H14L17 8H33V31H1Z" fill="#e8a50c" /><rect x="1" y="9" width="32" height="22" fill="#ffd96b" /><path d="M6 31V22Q6 19 9 19H25Q28 19 28 22V31H22V25H12V31Z" fill="#3a96dd" /></Ico>
          <Running $w={45} $two />
        </Cell>
        <Cell $w={58.900}>
          <Ico w={36}><path d="M2 34L4.500 26A16 16 0 1 1 11 32Z" fill="#2cc64e" stroke="#fff" strokeWidth="2.400" /><path d="M12 10Q14 9 15 12L16 14.500L14.500 17Q17 21 21 22.500L23 20.500L27 22.500Q27 27 22 27Q11 24 10 15Q10 12 12 10Z" fill="#fff" /></Ico>
        </Cell>
        <Cell $w={58.900}>
          <Ico w={36}><circle cx="12" cy="12" r="11" fill="#0a95dc" /><circle cx="24" cy="25" r="10" fill="#0878d4" /><circle cx="18.500" cy="18" r="16" fill="#0aa2ea" /><text x="18.500" y="26.500" textAnchor="middle" fontFamily="Open Sans, sans-serif" fontWeight="bold" fontSize="24" fill="#fff">S</text></Ico>
        </Cell>
        <Cell $w={58.900}>
          <Ico w={36}><circle cx="18" cy="18" r="17.300" fill="#2aa3dd" /><path d="M6 18L28 9L24.500 28L18 23.500L15 27L14 21Z" fill="#fff" /><path d="M14 21L25 12L16.500 22.500L15 27Z" fill="#b9dcee" /></Ico>
        </Cell>
        <Cell $w={58.900}>
          <Ico w={38} h={38}>
            <circle cx="20" cy="7" r="5.500" fill="#7b83eb" /><circle cx="31" cy="8.500" r="4" fill="#5059c9" /><path d="M25 15H37V26Q36 30 29 30Z" fill="#5059c9" /><path d="M12 15H28V30Q25 36 17 33Z" fill="#7b83eb" />
            <rect x="1" y="9" width="18" height="18" rx="1" fill="#4248b0" /><path d="M5.500 13.500H14.500M10 13.500V23.500" stroke="#fff" strokeWidth="2.300" />
            <circle cx="30" cy="29.500" r="7.800" fill="#fff" /><circle cx="30" cy="29.500" r="6.500" fill="#7bb900" /><path d="M26.500 29.500L29 32L33.500 27" stroke="#fff" strokeWidth="1.800" />
          </Ico>
          <Running $w={45} />
        </Cell>
        <Cell $w={58.900}>
          <Ico w={30} h={36}><path d="M4 4H26Q29 4 29 7V34L22 30H4Q1 30 1 27V7Q1 4 4 4Z" fill="#7289da" /><path d="M8 11Q15 8 22 11Q26 17 25 23Q22 26 20 25L18.500 23Q15 24 11.500 23L10 25Q8 26 5 23Q4 17 8 11Z" fill="#fff" /><ellipse cx="11.500" cy="18" rx="2" ry="2.300" fill="#7289da" /><ellipse cx="18.500" cy="18" rx="2" ry="2.300" fill="#7289da" /></Ico>
        </Cell>
        <Spacer $w={58.800} />
        <Cell $w={58}>
          <Ico w={34} h={38}><rect x="1" y="2" width="32" height="32" fill="#2aa8ee" /><path d="M22 34L33 12V34Z" fill="#6f8ee0" /><path d="M1 24L11 13L21 24L25 20L33 29V34H1Z" fill="#174a94" /><circle cx="22" cy="9.500" r="3.200" fill="#fff" /></Ico>
          <Running $w={45} $two />
        </Cell>
        <Cell $w={58}>
          <Ico w={34} h={38}>
            <defs>
              <linearGradient id="cc" x1="0" y1="0" x2="1" y2=".7"><stop stopColor="#f52a8c" /><stop offset=".3" stopColor="#f5263c" /><stop offset=".6" stopColor="#ffb21c" /><stop offset=".85" stopColor="#8ad13c" /><stop offset="1" stopColor="#2ab0c0" /></linearGradient>
              <linearGradient id="cc2" x1=".6" y1=".4" x2=".1" y2="1"><stop offset=".2" stopColor="#a040f0" stopOpacity="0" /><stop offset="1" stopColor="#5a48f8" /></linearGradient>
            </defs>
            <rect x="1" y="1" width="32" height="32" rx="6" fill="url(#cc)" /><rect x="1" y="1" width="32" height="32" rx="6" fill="url(#cc2)" />
            <circle cx="20" cy="16" r="8.500" stroke="#fff" strokeWidth="2.400" /><circle cx="13" cy="19" r="6.500" stroke="#fff" strokeWidth="2.400" /><path d="M13 18L18 22Q22 23 23 19Q24 14 19 13Q16 13 15 16" stroke="#fff" strokeWidth="2" />
          </Ico>
          <Running $w={45} />
        </Cell>
        <Cell $w={57.500}>
          <Ico w={34} h={38}><rect x="1" y="1" width="33" height="31.500" rx="6" fill="#330000" /><text x="17" y="22.500" textAnchor="middle" fontFamily="Open Sans, sans-serif" fontWeight="bold" fontSize="20" fill="#ff9a00">Ai</text></Ico>
          <Running $w={45} />
        </Cell>
        <Cell $w={57} $hot><FusionMark s={36} big /><Running $w={57} /></Cell>
        <Tray>
          <Ico w={20} h={12}><path d="M1 11L10 2L19 11" stroke="#fff" strokeWidth="1.500" /></Ico>
          <Spacer $w={14} />
          <Ico w={24}><path d="M7 0L12 3.500L7 7L2 3.500ZM17.500 0L23 3.500L17.500 7L12 3.500ZM17.500 7L23 11L17.500 15L12 11ZM14 16L20 16L16 19Z" fill="#fff" /><rect y="9" width="14" height="14" rx="2" fill="#d4001a" /><text x="7" y="21" textAnchor="middle" fontFamily="Open Sans, sans-serif" fontSize="14" fontWeight="bold" fill="#fff">1</text></Ico>
          <Spacer $w={15} />
          <Ico w={20}><path d="M1 19Q3 3 19 1M6 19Q8 8 19 6M11 19Q13 13 19 11" stroke="#d5d5d5" strokeWidth="1.500" /><circle cx="17" cy="17.500" r="1.700" fill="#fff" /></Ico>
          <Spacer $w={12} />
          <Ico w={26}><circle cx="12" cy="9" r="6.500" fill="#8c8c8c" /><circle cx="6" cy="14" r="5.500" fill="#e4e4e4" /><path d="M6 19L13 9Q20 9 20 19Z" fill="#b8b8b8" /><circle cx="18.500" cy="17.500" r="6.700" fill="#d3202c" /><path d="M15.500 14.500L21.500 20.500M21.500 14.500L15.500 20.500" stroke="#fff" strokeWidth="1.600" /></Ico>
          <Spacer $w={12} />
          <Ico w={24} h={20}><path d="M1 7H4L9 1.500V18.500L4 13H1Z" stroke="#fff" strokeWidth="1.400" /><path d="M12 7Q14 10 12 13" stroke="#fff" strokeWidth="1.300" /><path d="M15.500 4Q19 10 15.500 16M19 2Q24 10 19 18" stroke="#999" strokeWidth="1.300" /></Ico>
          <Lang>ENG</Lang>
          <Clock><span>3:39 pm</span><span>21/5/2021</span></Clock>
          <Spacer $w={27} />
          <Ico w={38} h={46}><path d="M0 10H24V29H12L7 34V29H0Z" fill="#fff" /><path d="M5 16H19M5 20H19M5 24H14" stroke="#444" strokeWidth="1.300" /><circle cx="24" cy="34" r="11.500" fill="#444" stroke="#8a8a8a" strokeWidth="1.300" /><text x="24" y="40" textAnchor="middle" fontFamily="Open Sans, sans-serif" fontSize="17" fontWeight="600" fill="#fff">3</text></Ico>
          <ShowDesktop />
        </Tray>
      </Taskbar>
    </Screen>
  );
}
